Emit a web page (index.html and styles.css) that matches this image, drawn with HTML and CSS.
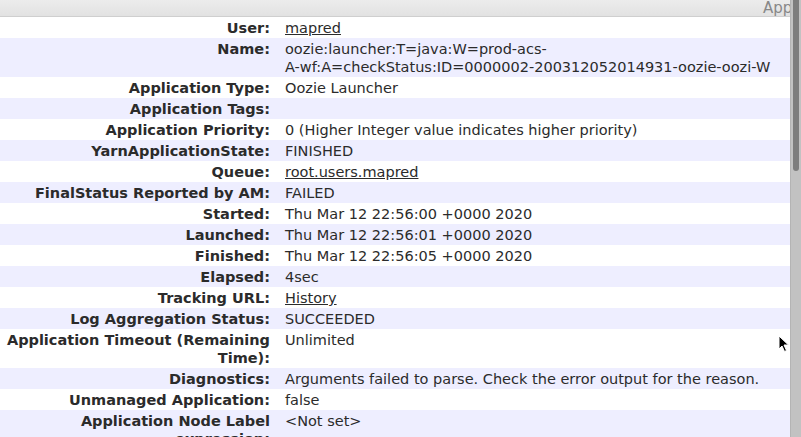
FILE: index.html
```
<!DOCTYPE html>
<html lang="en">
<head>
    <meta charset="UTF-8">
    <title>Application Overview</title>
    <link rel="stylesheet" href="styles.css">
</head>
<body>
    <div class="page">
        <main class="main">
            <!-- Section header (title cut off by scrollbar) -->
            <div class="section-head">Application Overview</div>

            <!-- Overview table -->
            <table class="info">
                <colgroup>
                    <col class="col-label">
                    <col>
                </colgroup>
                <tr><th>User:</th><td><a href="#">mapred</a></td></tr>
                <tr><th>Name:</th><td>oozie:launcher:T=java:W=prod-acs-<br>A-wf:A=checkStatus:ID=0000002-200312052014931-oozie-oozi-W</td></tr>
                <tr><th>Application Type:</th><td>Oozie Launcher</td></tr>
                <tr><th>Application Tags:</th><td></td></tr>
                <tr><th>Application Priority:</th><td>0 (Higher Integer value indicates higher priority)</td></tr>
                <tr><th>YarnApplicationState:</th><td>FINISHED</td></tr>
                <tr><th>Queue:</th><td><a href="#">root.users.mapred</a></td></tr>
                <tr><th>FinalStatus Reported by AM:</th><td>FAILED</td></tr>
                <tr><th>Started:</th><td>Thu Mar 12 22:56:00 +0000 2020</td></tr>
                <tr><th>Launched:</th><td>Thu Mar 12 22:56:01 +0000 2020</td></tr>
                <tr><th>Finished:</th><td>Thu Mar 12 22:56:05 +0000 2020</td></tr>
                <tr><th>Elapsed:</th><td>4sec</td></tr>
                <tr><th>Tracking URL:</th><td><a href="#">History</a></td></tr>
                <tr><th>Log Aggregation Status:</th><td>SUCCEEDED</td></tr>
                <tr><th>Application Timeout (Remaining Time):</th><td>Unlimited</td></tr>
                <tr><th>Diagnostics:</th><td>Arguments failed to parse. Check the error output for the reason.</td></tr>
                <tr><th>Unmanaged Application:</th><td>false</td></tr>
                <tr><th>Application Node Label expression:</th><td>&lt;Not set&gt;</td></tr>
            </table>
        </main>

        <!-- Scrollbar -->
        <div class="scrollbar">
            <div class="scroll-thumb"></div>
        </div>

        <!-- Mouse pointer -->
        <svg class="cursor" width="12" height="18" viewBox="0 0 12 18">
            <path d="M1 1 L1 14 L4 11 L6.5 16.5 L8.5 15.5 L6 10 L10.5 10 Z" fill="#000" stroke="#fff" stroke-width="1"/>
        </svg>
    </div>
</body>
</html>
```

FILE: styles.css
```
:root {
    --color-text: #2b2b2b;
    --color-stripe: #eeeeff;
    --color-head: #e6e6e6;
    --color-track: #c2c2c2;
    --color-thumb: #7d7d7d;
}

html, body {
    margin: 0;
    padding: 0;
    background: #fff;
}

body {
    font-family: "DejaVu Sans", sans-serif;
    font-size: 14.5px;
    color: var(--color-text);
}

/* Page frame */
.page {
    display: flex;
    height: 437px;
    overflow: hidden;
    position: relative;
}

.main {
    flex: 1;
    overflow: hidden;
}

/* Section header */
.section-head {
    height: 16px;
    border-bottom: 1px solid #cfcfcf;
    background: linear-gradient(#ececec, #e2e2e2);
    color: #888;
    font-size: 15px;
    line-height: 16px;
    padding-left: 763px;
    white-space: nowrap;
    overflow: hidden;
}

/* Overview table */
.info {
    width: 100%;
    border-collapse: collapse;
    table-layout: fixed;
}

.col-label {
    width: 278px;
}

.info tr:nth-child(even) {
    background: var(--color-stripe);
}

.info th,
.info td {
    line-height: 18px;
    padding: 2px 0 1px;
    vertical-align: top;
}

.info th {
    text-align: right;
    font-weight: bold;
    padding-left: 4px;
    padding-right: 8px;
}

.info td {
    padding-left: 7px;
    padding-right: 4px;
}

.info a {
    color: var(--color-text);
    text-decoration: underline;
}

/* Scrollbar */
.scrollbar {
    width: 10px;
    background: var(--color-track);
    border-left: 1px solid #b4b4b4;
}

.scroll-thumb {
    width: 6px;
    height: 171px;
    margin-left: 2px;
    background: var(--color-thumb);
    border-radius: 0 0 3px 3px;
}

.cursor {
    position: absolute;
    left: 778px;
    top: 335px;
}
```
